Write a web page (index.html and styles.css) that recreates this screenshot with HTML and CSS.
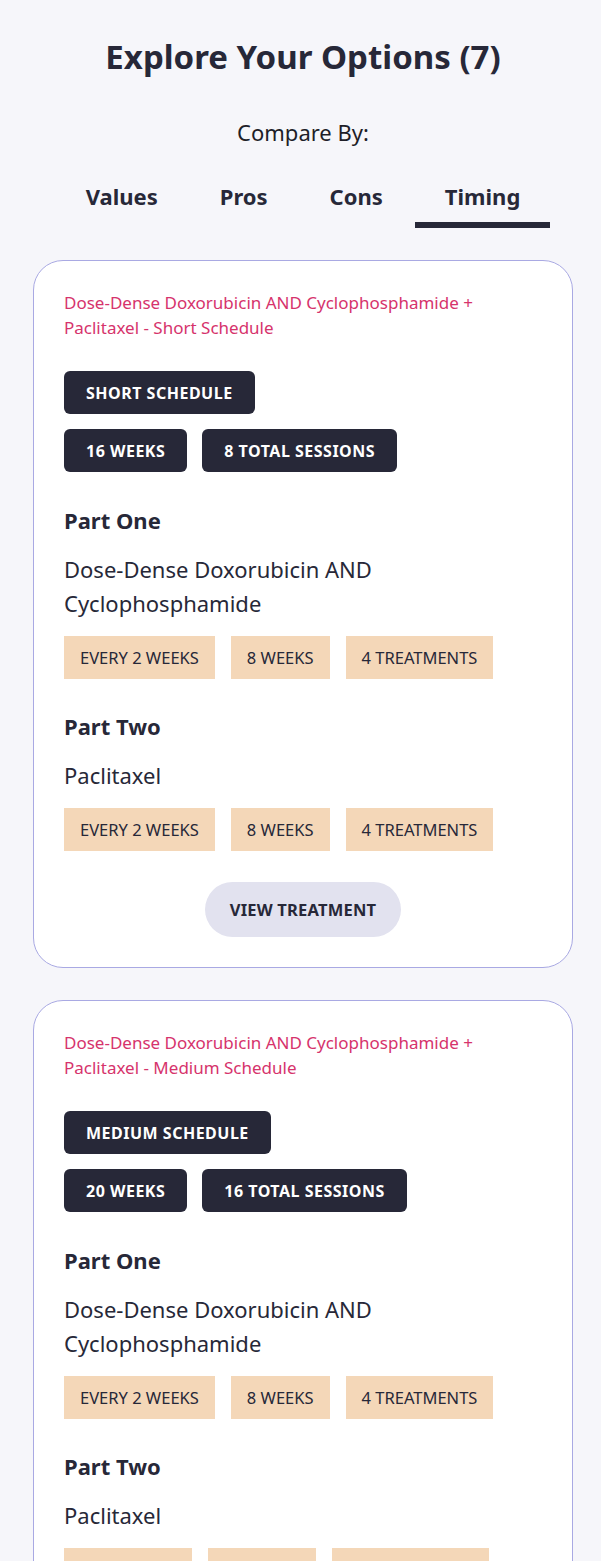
FILE: index.html
```html
<!DOCTYPE html>
<html lang="en">
<head>
<meta charset="utf-8">
<title>Explore Your Options</title>
<link rel="stylesheet" href="styles.css">
</head>
<body>
<main class="page">
  <h1 class="title">Explore Your Options (7)</h1>
  <p class="compare-label">Compare By:</p>
  <nav class="tabs">
    <span class="tab">Values</span>
    <span class="tab">Pros</span>
    <span class="tab">Cons</span>
    <span class="tab tab-active">Timing</span>
  </nav>

  <section class="card">
    <p class="card-title">Dose-Dense Doxorubicin AND Cyclophosphamide + Paclitaxel - Short Schedule</p>
    <div class="badge-row"><span class="badge">Short Schedule</span></div>
    <div class="badge-row"><span class="badge">16 Weeks</span><span class="badge">8 Total Sessions</span></div>

    <h2 class="part-heading">Part One</h2>
    <p class="part-name">Dose-Dense Doxorubicin AND Cyclophosphamide</p>
    <div class="tag-row"><span class="tag">Every 2 Weeks</span><span class="tag">8 Weeks</span><span class="tag">4 Treatments</span></div>

    <h2 class="part-heading">Part Two</h2>
    <p class="part-name">Paclitaxel</p>
    <div class="tag-row"><span class="tag">Every 2 Weeks</span><span class="tag">8 Weeks</span><span class="tag">4 Treatments</span></div>

    <div class="actions"><button class="view-btn" type="button">View Treatment</button></div>
  </section>

  <section class="card">
    <p class="card-title">Dose-Dense Doxorubicin AND Cyclophosphamide + Paclitaxel - Medium Schedule</p>
    <div class="badge-row"><span class="badge">Medium Schedule</span></div>
    <div class="badge-row"><span class="badge">20 Weeks</span><span class="badge">16 Total Sessions</span></div>

    <h2 class="part-heading">Part One</h2>
    <p class="part-name">Dose-Dense Doxorubicin AND Cyclophosphamide</p>
    <div class="tag-row"><span class="tag">Every 2 Weeks</span><span class="tag">8 Weeks</span><span class="tag">4 Treatments</span></div>

    <h2 class="part-heading">Part Two</h2>
    <p class="part-name">Paclitaxel</p>
    <div class="tag-row"><span class="tag">Every Week</span><span class="tag">12 Weeks</span><span class="tag">12 Treatments</span></div>

    <div class="actions"><button class="view-btn" type="button">View Treatment</button></div>
  </section>
</main>
</body>
</html>
```

FILE: styles.css
```css
html, body {
  margin: 0;
  padding: 0;
  background: #f6f6fa;
}

body {
  font-family: "Noto Sans", "Open Sans", sans-serif;
  color: #272838;
  height: 1561px;
  overflow: hidden;
}

.page {
  width: 540px;
  margin-left: 33px;
  display: flex;
  flex-direction: column;
  align-items: center;
}

.title {
  margin: 37px 0 0;
  font-size: 33px;
  line-height: 40px;
  font-weight: 700;
  color: #272838;
  text-align: center;
}

.compare-label {
  margin: 41px 0 0;
  font-size: 22px;
  line-height: 28px;
  color: #1e1e28;
}

.tabs {
  margin-top: 36px;
  display: flex;
  gap: 2px;
}

.tab {
  padding: 0 30px 12px;
  font-size: 22px;
  line-height: 28px;
  font-weight: 700;
  border-bottom: 6px solid transparent;
}

.tab-active {
  border-bottom-color: #272838;
}

.card {
  align-self: stretch;
  margin-top: 32px;
  background: #ffffff;
  border: 1px solid #a9a9e3;
  border-radius: 30px;
  padding: 29px 30px 30px;
  display: flex;
  flex-direction: column;
}

.card-title {
  margin: 0;
  max-width: 420px;
  font-size: 17px;
  line-height: 25px;
  color: #d6336c;
}

.badge-row {
  display: flex;
  gap: 15px;
  margin-top: 15px;
}

.card-title + .badge-row {
  margin-top: 31px;
}

.badge {
  height: 43px;
  padding: 0 22px;
  display: inline-flex;
  align-items: center;
  background: #272838;
  color: #ffffff;
  border-radius: 6px;
  font-size: 16px;
  font-weight: 700;
  text-transform: uppercase;
  letter-spacing: 0.5px;
}

.part-heading {
  margin: 33px 0 0;
  font-size: 22px;
  line-height: 28px;
  font-weight: 700;
}

.card-title ~ .badge-row + .part-heading {
  margin-top: 34px;
}

.part-name {
  margin: 18px 0 0;
  font-size: 22px;
  line-height: 34px;
  max-width: 340px;
}

.tag-row {
  display: flex;
  gap: 16px;
  margin-top: 16px;
}

.tag {
  height: 43px;
  padding: 0 16px;
  display: inline-flex;
  align-items: center;
  background: #f4d7b8;
  color: #272838;
  font-size: 16.5px;
  text-transform: uppercase;
}

.actions {
  display: flex;
  justify-content: center;
  margin-top: 31px;
}

.view-btn {
  height: 55px;
  padding: 0 25px;
  border: none;
  border-radius: 28px;
  background: #e2e2ef;
  color: #272838;
  font-family: inherit;
  font-size: 16.5px;
  font-weight: 700;
  letter-spacing: 0.2px;
  text-transform: uppercase;
}
```
